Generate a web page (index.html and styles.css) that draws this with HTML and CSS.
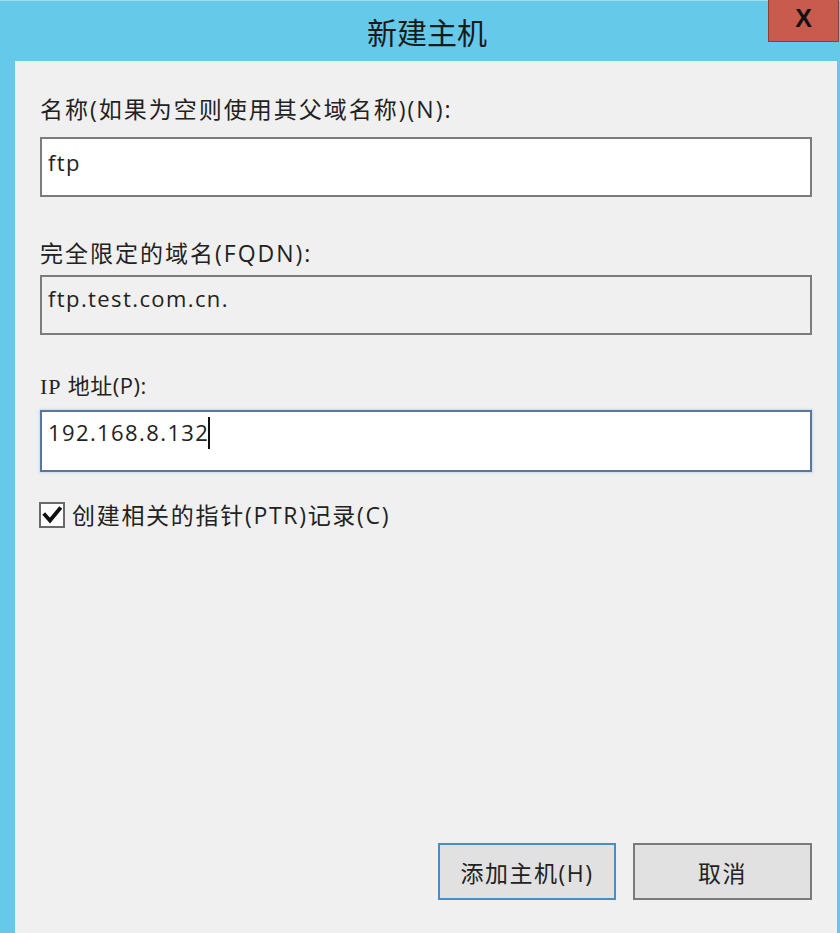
FILE: index.html
```html
<!DOCTYPE html>
<html lang="zh-CN">
<head>
<meta charset="utf-8">
<title>新建主机</title>
<link rel="stylesheet" href="styles.css">
</head>
<body>
<div class="window">
  <div class="titlebar">
    <div class="title">新建主机</div>
    <div class="close">X</div>
  </div>
  <div class="client">
    <div class="label label-name">名称(如果为空则使用其父域名称)(N):</div>
    <div class="field field-name">ftp</div>
    <div class="label label-fqdn">完全限定的域名(FQDN):</div>
    <div class="field field-readonly">ftp.test.com.cn.</div>
    <div class="label label-ip"><span class="ip-latin">IP</span> 地址(P):</div>
    <div class="field field-focus">192.168.8.132<span class="caret"></span></div>
    <div class="check-row">
      <span class="checkbox">
        <svg width="20" height="20" viewBox="0 0 20 20"><path d="M3 10 L8 15.5 L17.5 4" fill="none" stroke="#111" stroke-width="3.8" stroke-linecap="square" stroke-linejoin="miter"/></svg>
      </span>
      <span class="check-text">创建相关的指针(PTR)记录(C)</span>
    </div>
    <div class="buttons">
      <div class="btn btn-default">添加主机(H)</div>
      <div class="btn">取消</div>
    </div>
  </div>
</div>
</body>
</html>
```
FILE: styles.css
```css
html, body {
  margin: 0;
  padding: 0;
  background: #65c9e9;
}
.window {
  width: 840px;
  height: 933px;
  display: flex;
  flex-direction: column;
  background: #65c9e9;
  font-family: "Open Sans", "Noto Sans CJK SC", sans-serif;
  color: #222;
  position: relative;
}
.titlebar {
  height: 61px;
  flex: none;
  display: flex;
  align-items: center;
  justify-content: center;
  padding-left: 14px;
  box-sizing: border-box;
  border-top: 1px solid #9fdcf0;
}
.title {
  font-family: "Noto Sans CJK SC", sans-serif;
  font-size: 30px;
  color: #1a1a1a;
  line-height: 40px;
}
.close {
  position: absolute;
  top: 0;
  right: 1px;
  width: 71px;
  height: 42px;
  box-sizing: border-box;
  background: #c85a4e;
  border: 1px solid #8e3e36;
  border-top: none;
  font-family: "Liberation Sans", sans-serif;
  font-weight: bold;
  font-size: 25px;
  color: #111;
  display: flex;
  align-items: center;
  justify-content: center;
  padding-bottom: 4px;
}
.client {
  flex: 1;
  margin: 0 3px 0 15px;
  background: #f0f0f0;
  padding: 33px 25px 33px 25px;
  display: flex;
  flex-direction: column;
}
.label {
  font-size: 23px;
  letter-spacing: 2px;
  line-height: 30px;
  height: 30px;
  white-space: nowrap;
}
.label-fqdn { margin-top: 41px; }
.label-ip {
  margin-top: 35px;
  letter-spacing: 0.5px;
  font-size: 22px;
}
.ip-latin {
  font-family: "Liberation Serif", serif;
  font-size: 22px;
  letter-spacing: 1px;
}
.field {
  box-sizing: border-box;
  height: 60px;
  border: 2px solid #7c7c7c;
  background: #fff;
  font-size: 22px;
  letter-spacing: 1.4px;
  line-height: 30px;
  padding: 8px 0 0 6px;
  white-space: nowrap;
}
.field-name { margin-top: 13px; }
.field-readonly {
  margin-top: 7px;
  background: #f0f0f0;
  padding-top: 6px;
}
.field-focus {
  margin-top: 10px;
  height: 62px;
  border-color: #5a7799;
  box-shadow: 0 0 2px 1px rgba(170, 205, 235, 0.6);
  padding-top: 5px;
}
.caret {
  display: inline-block;
  width: 2px;
  height: 32px;
  background: #111;
  vertical-align: -8px;
  margin-left: -1px;
}
.check-row {
  margin-top: 29px;
  display: flex;
  align-items: center;
  gap: 7px;
  height: 27px;
}
.checkbox {
  width: 26px;
  height: 26px;
  box-sizing: border-box;
  border: 2px solid #6a6a6a;
  background: #fff;
  display: flex;
  align-items: center;
  justify-content: center;
  margin-left: -1px;
}
.check-text {
  font-size: 23px;
  letter-spacing: 1.7px;
  line-height: 30px;
  white-space: nowrap;
}
.buttons {
  margin-top: auto;
  display: flex;
  justify-content: flex-end;
  gap: 17px;
}
.btn {
  width: 179px;
  height: 57px;
  box-sizing: border-box;
  background: #e1e1e1;
  border: 2px solid #7a7a7a;
  font-size: 23px;
  letter-spacing: 1.5px;
  display: flex;
  align-items: center;
  justify-content: center;
}
.btn-default {
  width: 178px;
  border-color: #4a8cc4;
}
```
